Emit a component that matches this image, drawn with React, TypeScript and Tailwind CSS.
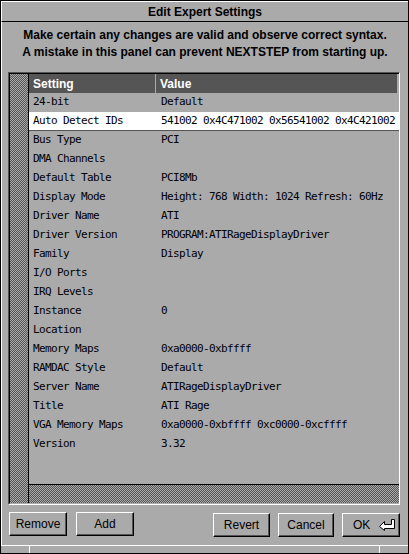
const rows: [string, string][] = [
  ["24-bit", "Default"],
  ["Auto Detect IDs", "541002 0x4C471002 0x56541002 0x4C421002"],
  ["Bus Type", "PCI"],
  ["DMA Channels", ""],
  ["Default Table", "PCI8Mb"],
  ["Display Mode", "Height: 768 Width: 1024 Refresh: 60Hz"],
  ["Driver Name", "ATI"],
  ["Driver Version", "PROGRAM:ATIRageDisplayDriver"],
  ["Family", "Display"],
  ["I/O Ports", ""],
  ["IRQ Levels", ""],
  ["Instance", "0"],
  ["Location", ""],
  ["Memory Maps", "0xa0000-0xbffff"],
  ["RAMDAC Style", "Default"],
  ["Server Name", "ATIRageDisplayDriver"],
  ["Title", "ATI Rage"],
  ["VGA Memory Maps", "0xa0000-0xbffff 0xc0000-0xcffff"],
  ["Version", "3.32"],
]

const checker =
  "bg-[image:repeating-conic-gradient(#555_0_25%,#aaa_0_50%)] bg-[length:2px_2px]"

function Button({ label, width, icon }: { label: string; width: string; icon?: boolean }) {
  return (
    <button
      className={`${width} h-[24px] flex items-center ${icon ? "justify-between pl-[10px] pr-[3px]" : "justify-center"} bg-[#aaa] border-t border-l border-white border-b border-r border-b-black border-r-black shadow-[inset_-1px_-1px_0_#555] text-[12px] text-black`}
    >
      <span>{label}</span>
      {icon && (
        <svg width="17" height="12" viewBox="0 0 17 12">
          <path
            d="M0.5 7.5 L5.5 2.5 L5.5 5.5 L12.5 5.5 L12.5 0.5 L15.5 0.5 L15.5 9.5 L5.5 9.5 L5.5 11.5 Z"
            fill="#fff"
            stroke="#000"
            strokeWidth="1"
          />
        </svg>
      )}
    </button>
  )
}

export default function App() {
  return (
    <div className="w-[409px] h-[554px] bg-[#aaa] border border-black flex flex-col font-['Liberation_Sans',Arial,sans-serif] text-black">
      <div className="h-[21px] shrink-0 border-t border-l border-white border-b border-b-black flex items-center justify-center font-bold text-[12px]">
        Edit Expert Settings
      </div>

      <div className="flex-1 border-l border-white flex flex-col pl-[6px]">
        <p className="pt-[5px] text-center font-bold text-[12px] leading-[17px] pr-[6px]">
          Make certain any changes are valid and observe correct syntax.
          <br />
          A mistake in this panel can prevent NEXTSTEP from starting up.
        </p>

        <div className="mt-[11px] w-[392px] h-[433px] border-t border-l border-[#555] border-b border-r border-b-white border-r-white">
          <div className="h-full border-t border-l border-black border-b border-b-[#aaa] flex">
            <div className={`w-[19px] shrink-0 border-r border-black ${checker}`} />
            <div className="flex-1 flex flex-col font-['DejaVu_Sans_Mono',monospace] text-[11px] tracking-[-0.62px]">
              <div className="h-[19px] shrink-0 mr-[2px] bg-[#555] text-white font-['Liberation_Sans',Arial,sans-serif] font-bold text-[12px] tracking-normal grid grid-cols-[127px_1fr] items-center">
                <span className="pl-[4px] border-r border-[#aaa] h-full flex items-center">Setting</span>
                <span className="pl-[4px]">Value</span>
              </div>
              {rows.map(([name, value], i) => (
                <div
                  key={name}
                  className={`h-[19px] shrink-0 grid grid-cols-[128px_1fr] items-center whitespace-nowrap ${i === 1 ? "bg-white border-b border-[#555]" : ""}`}
                >
                  <span className="pl-[4px]">{name}</span>
                  <span className="pl-[4px]">{value}</span>
                </div>
              ))}
              <div className="flex-1" />
              <div className={`h-[19px] shrink-0 border-t border-black ${checker}`} />
            </div>
          </div>
        </div>

        <div className="mt-[7px] flex items-start pl-[1px] pr-[8px]">
          <div className="flex gap-[9px]">
            <Button label="Remove" width="w-[58px]" />
            <Button label="Add" width="w-[58px]" />
          </div>
          <div className="ml-auto mt-[1px] flex gap-[8px]">
            <Button label="Revert" width="w-[57px]" />
            <Button label="Cancel" width="w-[56px]" />
            <Button label="OK" width="w-[58px]" icon />
          </div>
        </div>
      </div>

      <div className="h-[8px] shrink-0 border-t border-white flex">
        <div className="w-[29px] border-r border-white" />
        <div className="flex-1 border-r border-white" />
        <div className="w-[28px]" />
      </div>
    </div>
  )
}
